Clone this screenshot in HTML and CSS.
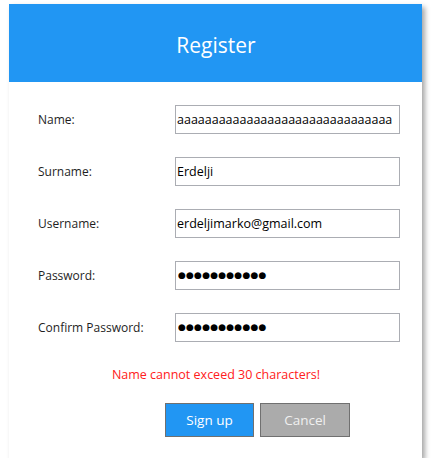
FILE: index.html
```html
<!DOCTYPE html>
<html lang="en">
<head>
<meta charset="utf-8">
<title>Register</title>
<link rel="stylesheet" href="styles.css">
</head>
<body>
<div class="card">
  <div class="header">Register</div>
  <div class="form">
    <label class="label" for="name">Name:</label>
    <input class="field" id="name" type="text" value="aaaaaaaaaaaaaaaaaaaaaaaaaaaaaaa">
    <label class="label" for="surname">Surname:</label>
    <input class="field" id="surname" type="text" value="Erdelji">
    <label class="label" for="username">Username:</label>
    <input class="field" id="username" type="text" value="erdeljimarko@gmail.com">
    <label class="label" for="password">Password:</label>
    <input class="field dots" id="password" type="text" value="●●●●●●●●●●●">
    <label class="label" for="confirm">Confirm Password:</label>
    <input class="field dots" id="confirm" type="text" value="●●●●●●●●●●●">
  </div>
  <div class="error">Name cannot exceed 30 characters!</div>
  <div class="actions">
    <button class="btn btn-primary" type="button">Sign up</button>
    <button class="btn btn-secondary" type="button">Cancel</button>
  </div>
</div>
</body>
</html>
```
FILE: styles.css
```css
html, body {
  margin: 0;
  padding: 0;
  background: #ffffff;
}
body {
  font-family: "Open Sans", "Noto Sans", sans-serif;
  color: #1e1e1e;
}
.card {
  margin: 4px 0 0 9px;
  width: 413px;
  height: 454px;
  background: #ffffff;
  box-shadow: 3px 3px 5px rgba(0, 0, 0, 0.35);
  display: flex;
  flex-direction: column;
}
.header {
  box-sizing: border-box;
  height: 78px;
  background: #2196f3;
  color: #ffffff;
  font-size: 21px;
  display: flex;
  align-items: center;
  justify-content: center;
  padding: 3px 0 0 1px;
}
.form {
  display: grid;
  grid-template-columns: 137px 225px;
  column-gap: 0;
  row-gap: 23.5px;
  padding: 23px 0 0 29px;
  align-items: center;
}
.label {
  font-size: 12px;
  color: #1e1e1e;
}
.field {
  box-sizing: border-box;
  width: 225px;
  height: 28.5px;
  border: 1px solid #abadb3;
  padding: 0 1px;
  margin: 0;
  font-family: "Open Sans", "Noto Sans", sans-serif;
  font-size: 12.5px;
  color: #000000;
  background: #ffffff;
  outline: none;
}
.dots {
  font-family: "DejaVu Sans", sans-serif;
  font-size: 9px;
  letter-spacing: 0.2px;
  padding-left: 2px;
}
.error {
  margin-top: 24px;
  text-align: center;
  font-size: 12.5px;
  color: #ff2020;
  padding-left: 1px;
}
.actions {
  display: flex;
  justify-content: flex-start;
  gap: 6px;
  margin-top: 20px;
  padding-left: 156px;
}
.btn {
  box-sizing: border-box;
  height: 34px;
  border: 1px solid #707070;
  font-family: "Open Sans", "Noto Sans", sans-serif;
  font-size: 13.5px;
  color: #ffffff;
  padding: 0;
}
.btn-primary {
  width: 89px;
  background: #2196f3;
}
.btn-secondary {
  width: 90px;
  background: #ababab;
  color: #f0f0f0;
}
```
